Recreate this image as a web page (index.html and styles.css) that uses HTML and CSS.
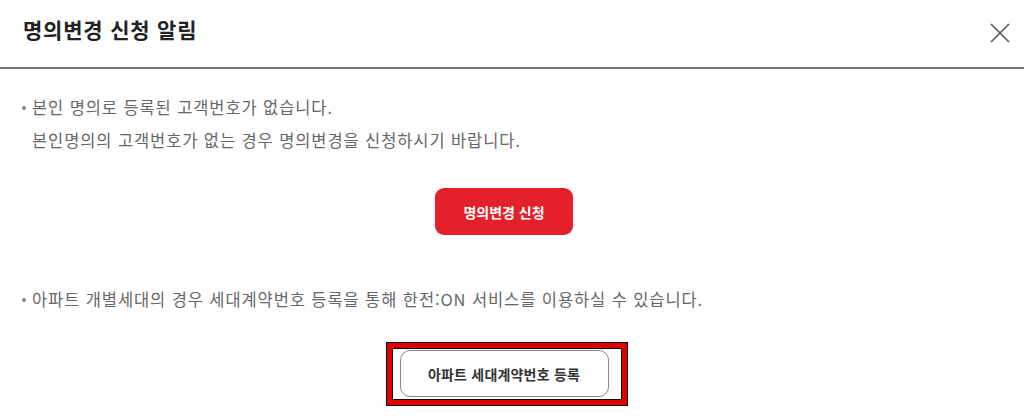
FILE: index.html
```html
<!DOCTYPE html>
<html lang="ko">
<head>
<meta charset="utf-8">
<link rel="stylesheet" href="styles.css">
</head>
<body>
<div class="modal">
  <div class="modal-header">
    <h1 class="modal-title">명의변경 신청 알림</h1>
    <button class="close-btn" aria-label="닫기">
      <svg width="20" height="20" viewBox="0 0 20 20"><path d="M1 1 L19 19 M19 1 L1 19" stroke="#555" stroke-width="1.6" fill="none"/></svg>
    </button>
  </div>
  <div class="modal-body">
    <ul class="notice">
      <li>본인 명의로 등록된 고객번호가 없습니다.<br>본인명의의 고객번호가 없는 경우 명의변경을 신청하시기 바랍니다.</li>
    </ul>
    <div class="action">
      <button class="btn-red">명의변경 신청</button>
    </div>
    <ul class="notice notice-2">
      <li>아파트 개별세대의 경우 세대계약번호 등록을 통해 한전:ON 서비스를 이용하실 수 있습니다.</li>
    </ul>
    <div class="action">
      <div class="highlight">
        <button class="btn-outline">아파트 세대계약번호 등록</button>
      </div>
    </div>
  </div>
</div>
</body>
</html>
```
FILE: styles.css
```css
* { box-sizing: border-box; }
html, body { margin: 0; padding: 0; background: #fff; }
body {
  font-family: "Noto Sans CJK KR", "Noto Sans", sans-serif;
  width: 1024px;
  height: 416px;
  overflow: hidden;
}
.modal-header {
  height: 69px;
  border-bottom: 2px solid #777;
  display: flex;
  align-items: center;
  justify-content: space-between;
  padding: 0 14px 10px 23px;
}
.modal-title {
  margin: 0;
  font-size: 21px;
  font-weight: 700;
  color: #222;
  letter-spacing: 0.8px;
}
.close-btn {
  border: 0;
  background: none;
  padding: 0;
  width: 20px;
  height: 20px;
  display: flex;
  margin-top: 9px;
}
.modal-body {
  padding: 22px 38px 0 22px;
}
.notice {
  margin: 0;
  padding: 0;
  list-style: none;
}
.notice li {
  position: relative;
  padding-left: 10px;
  font-size: 16.5px;
  letter-spacing: 0.9px;
  line-height: 33px;
  color: #666;
}
.notice li::before {
  content: "";
  position: absolute;
  left: 0;
  top: 15px;
  width: 4px;
  height: 4px;
  border-radius: 50%;
  background: #888;
}
.action {
  display: flex;
  justify-content: center;
}
.btn-red {
  margin-top: 31px;
  width: 138px;
  height: 47px;
  border: 0;
  border-radius: 9px;
  background: #e4202a;
  color: #fff;
  font-family: inherit;
  font-size: 14px;
  font-weight: 700;
}
.notice-2 { margin-top: 48px; }
.highlight {
  margin-top: 27px;
  margin-left: 5px;
  border: 5px solid #e00000;
  box-shadow: 0 0 0 1px #000, inset 0 0 0 1px #000;
  padding: 2px 13px 3px 8px;
}
.btn-outline {
  display: block;
  width: 209px;
  height: 47px;
  border: 1px solid #888;
  border-radius: 10px;
  background: #fff;
  color: #333;
  font-family: inherit;
  font-size: 14px;
  font-weight: 700;
  letter-spacing: 0.2px;
}
```
